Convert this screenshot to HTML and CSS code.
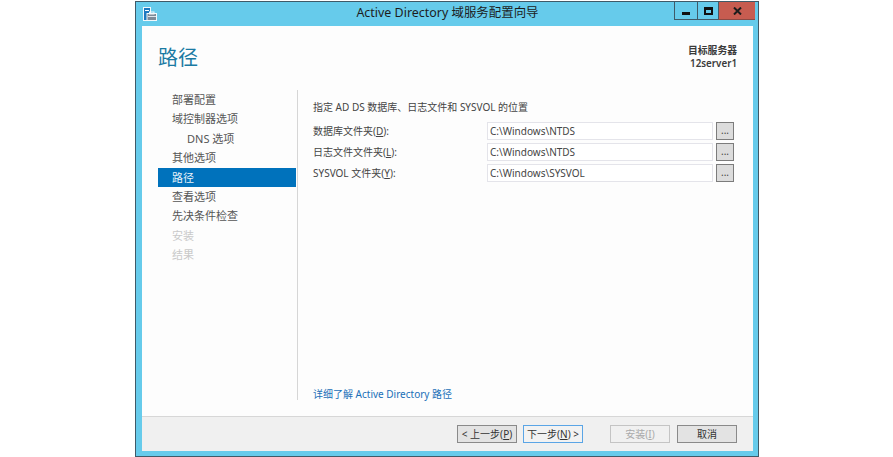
FILE: index.html
```html
<!DOCTYPE html>
<html lang="zh-CN">
<head>
<meta charset="utf-8">
<title>Active Directory 域服务配置向导</title>
<link rel="stylesheet" href="styles.css">
</head>
<body>
<div class="window">
  <header class="titlebar">
    <svg class="app-icon" width="14" height="15" viewBox="0 0 14 15">
      <rect x="0.5" y="0.5" width="7" height="13" fill="#1e78c0" stroke="#f2f8fb"/>
      <rect x="2" y="3" width="4" height="1" fill="#fff"/>
      <rect x="4" y="6.5" width="9.5" height="7" fill="#7d8a98" stroke="#f2f8fb"/>
      <rect x="6.5" y="5" width="4.5" height="2" fill="none" stroke="#f2f8fb"/>
      <rect x="5" y="9" width="8" height="1" fill="#dfe6ec"/>
    </svg>
    <div class="title">Active Directory 域服务配置向导</div>
    <div class="controls">
      <div class="ctl ctl-min"><span class="glyph-min"></span></div>
      <div class="ctl ctl-max"><span class="glyph-max"></span></div>
      <div class="ctl ctl-close"><svg width="9" height="8" viewBox="0 0 9 8"><path d="M1 0.5 L8 7.5 M8 0.5 L1 7.5" stroke="#1c1c1c" stroke-width="2" fill="none"/></svg></div>
    </div>
  </header>
  <div class="client">
    <div class="head">
      <h1 class="page-title">路径</h1>
      <div class="target">目标服务器<br>12server1</div>
    </div>
    <div class="body">
      <nav class="nav">
        <div class="nav-item">部署配置</div>
        <div class="nav-item">域控制器选项</div>
        <div class="nav-item sub">DNS 选项</div>
        <div class="nav-item">其他选项</div>
        <div class="nav-item active">路径</div>
        <div class="nav-item">查看选项</div>
        <div class="nav-item">先决条件检查</div>
        <div class="nav-item disabled">安装</div>
        <div class="nav-item disabled">结果</div>
      </nav>
      <main class="content">
        <p class="intro">指定 AD DS 数据库、日志文件和 SYSVOL 的位置</p>
        <div class="form">
          <label class="lbl">数据库文件夹(<u>D</u>):</label>
          <div class="input">C:\Windows\NTDS</div>
          <div class="browse">...</div>
          <label class="lbl">日志文件文件夹(<u>L</u>):</label>
          <div class="input">C:\Windows\NTDS</div>
          <div class="browse">...</div>
          <label class="lbl">SYSVOL 文件夹(<u>Y</u>):</label>
          <div class="input">C:\Windows\SYSVOL</div>
          <div class="browse">...</div>
        </div>
        <a class="more">详细了解 Active Directory 路径</a>
      </main>
    </div>
    <footer class="footer">
      <div class="btn prev">&lt; 上一步(<u>P</u>)</div>
      <div class="btn next">下一步(<u>N</u>) &gt;</div>
      <div class="btn install">安装(<u>I</u>)</div>
      <div class="btn cancel">取消</div>
    </footer>
  </div>
</div>
</body>
</html>
```
FILE: styles.css
```css
* { box-sizing: border-box; }
html, body { margin: 0; padding: 0; background: #fff; }
body {
  font-family: "Noto Sans", "Noto Sans CJK SC", sans-serif;
  font-size: 10px;
  color: #444;
  padding-top: 1px;
  height: 457px;
  overflow: hidden;
}
.window {
  width: 624px;
  height: 456px;
  margin-left: 135px;
  background: #66cbeb;
  border: 1px solid #3f5a68;
  padding: 0 5px 5px 6px;
  display: flex;
  flex-direction: column;
}
.titlebar {
  height: 24px;
  flex: none;
  display: flex;
  align-items: flex-start;
  position: relative;
}
.app-icon { margin: 5px 0 0 1px; }
.title {
  position: absolute;
  left: 0; right: 0; top: 3px;
  text-align: center;
  font-size: 12.45px;
  line-height: 16px;
  color: #1d1d1d;
}
.controls {
  position: absolute;
  right: -2px; top: 0;
  display: flex;
  height: 18px;
}
.ctl {
  height: 18px;
  display: flex;
  align-items: center;
  justify-content: center;
  border-bottom: 1px solid #3f5a68;
  border-left: 1px solid #3f5a68;
}
.ctl-min { width: 23px; }
.ctl-max { width: 21px; }
.ctl-close { width: 37px; background: #c75c50; border-bottom-color: #8a4a44; }
.glyph-min { width: 8px; height: 3px; background: #111; margin-top: 5px; }
.glyph-max { width: 9px; height: 8px; border: 2px solid #111; border-top-width: 3px; }
.client {
  flex: 1;
  background: #fdfdfd;
  display: flex;
  flex-direction: column;
  min-height: 0;
}
.head {
  height: 64px;
  flex: none;
  display: flex;
  justify-content: space-between;
  padding: 17px 16px 0 16px;
}
.page-title {
  margin: 0;
  font-size: 20px;
  line-height: 30px;
  font-weight: 400;
  color: #1a7aa3;
}
.target {
  font-size: 9.8px;
  line-height: 13.4px;
  font-weight: 600;
  text-align: right;
  color: #3a3a3a;
  padding-top: 1px;
}
.body {
  flex: 1;
  display: flex;
  padding-left: 16px;
  min-height: 0;
  padding-bottom: 16px;
}
.nav {
  width: 139px;
  flex: none;
}
.nav-item {
  height: 19.4px;
  line-height: 19.2px;
  font-size: 11px;
  padding-left: 14px;
  color: #555;
  margin-right: 1px;
}
.nav-item.sub { padding-left: 29px; }
.nav-item.active { background: #0072bc; color: #e8f3fa; }
.nav-item.disabled { color: #c9c9c9; }
.content {
  flex: 1;
  border-left: 1px solid #d6d6d6;
  padding: 10px 19px 0 15px;
  display: flex;
  flex-direction: column;
}
.intro { margin: 0 0 7px; font-size: 10px; line-height: 15px; }
.form {
  display: grid;
  grid-template-columns: 174px 226px 21px;
  row-gap: 3px;
  grid-auto-rows: 18px;
  align-items: stretch;
}
.lbl { font-size: 10px; line-height: 18px; }
.input {
  border: 1px solid #e4e4ea;
  background: #fff;
  font-size: 10px;
  line-height: 16px;
  padding-left: 2px;
}
.browse {
  margin-left: 3px;
  border: 1px solid #7c7c7c;
  background: #dcdcdc;
  font-size: 10px;
  line-height: 15px;
  text-align: center;
  color: #444;
}
.more {
  margin-top: auto;
  margin-bottom: -1px;
  font-size: 10px;
  line-height: 14px;
  color: #1a70b8;
}
.footer {
  height: 35px;
  flex: none;
  background: #f0f0f0;
  border-top: 1px solid #d7d7d7;
  display: flex;
  justify-content: flex-end;
  align-items: flex-start;
  padding: 8px 16px 0 0;
}
.btn {
  width: 60px;
  height: 18px;
  border: 1px solid #8a8a8a;
  background: #e3e3e3;
  font-size: 10px;
  line-height: 16px;
  text-align: center;
  color: #333;
}
.next { border-color: #5aa5e6; background: #f2f2f2; margin-left: 6px; }
.install { margin-left: 27px; border-color: #c4c4c4; background: #f0f0f0; color: #aaa; }
.cancel { margin-left: 7px; }
```
